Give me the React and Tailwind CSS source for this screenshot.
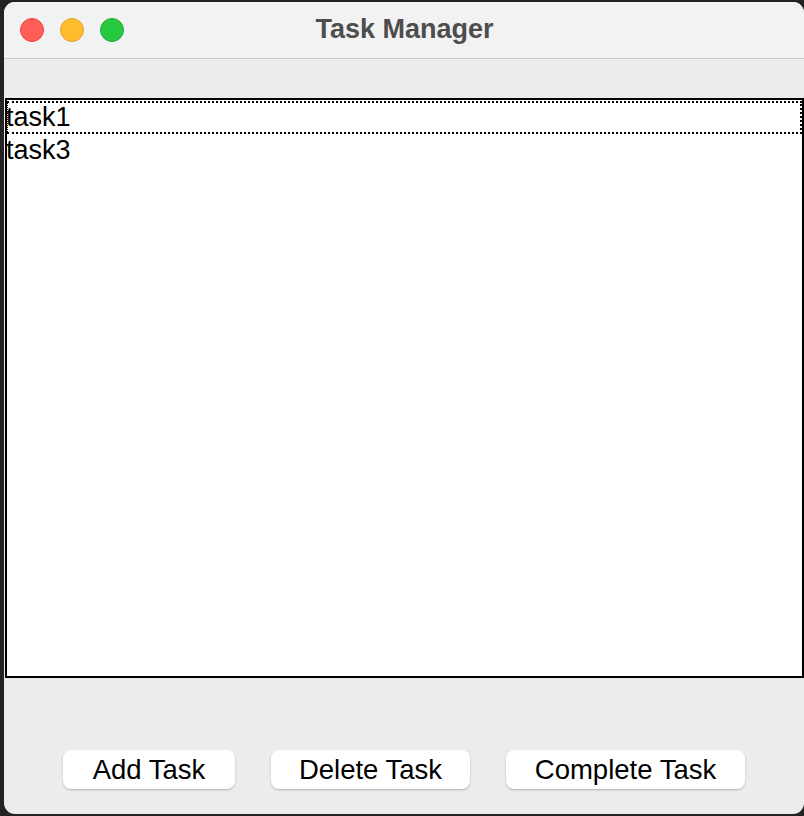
export default function App() {
  const font = { fontFamily: '"Liberation Sans", Arial, Helvetica, sans-serif' };
  return (
    <div className="w-[804px] h-[816px] bg-[#232323] pt-[2px] pl-[4px] overflow-hidden" style={font}>
      <div className="w-[800px] h-[812px] rounded-[11px] bg-[#ececec] overflow-hidden flex flex-col">
        <div className="h-[57px] shrink-0 bg-[#f2f2f2] border-b border-[#c9c9c9] relative flex items-center justify-center">
          <div className="absolute left-[16px] top-[16px] flex gap-[16px]">
            <div className="w-[24px] h-[24px] rounded-full bg-[#ff5f57] border border-[#e5473f]" />
            <div className="w-[24px] h-[24px] rounded-full bg-[#febc2e] border border-[#e1a325]" />
            <div className="w-[24px] h-[24px] rounded-full bg-[#28c840] border border-[#1fad34]" />
          </div>
          <div className="text-[27px] font-bold text-[#4d4d4d] leading-none pb-[2px] pl-[1px]">Task Manager</div>
        </div>
        <div className="h-[39px] shrink-0" />
        <div className="ml-[1px] w-[799px] h-[580px] shrink-0 bg-white border-2 border-black pt-[1px]">
          <div className="h-[33px] border-2 border-dotted border-black border-l-[1px] text-[27px] leading-[28px] text-black">
            <span className="-ml-[2px]">task1</span>
          </div>
          <div className="h-[33px] text-[27px] leading-[34px] text-black -mt-[1px]">
            <span className="-ml-[1px]">task3</span>
          </div>
        </div>
        <div className="flex justify-center gap-[36px] mt-[72px]">
          <button className="w-[172px] h-[39px] bg-white rounded-[8px] shadow-[0_1px_2px_rgba(0,0,0,0.25)] text-[27.5px] text-black leading-none">Add Task</button>
          <button className="w-[199px] h-[39px] bg-white rounded-[8px] shadow-[0_1px_2px_rgba(0,0,0,0.25)] text-[27.5px] text-black leading-none">Delete Task</button>
          <button className="w-[239px] h-[39px] bg-white rounded-[8px] shadow-[0_1px_2px_rgba(0,0,0,0.25)] text-[27.5px] text-black leading-none">Complete Task</button>
        </div>
      </div>
    </div>
  );
}
